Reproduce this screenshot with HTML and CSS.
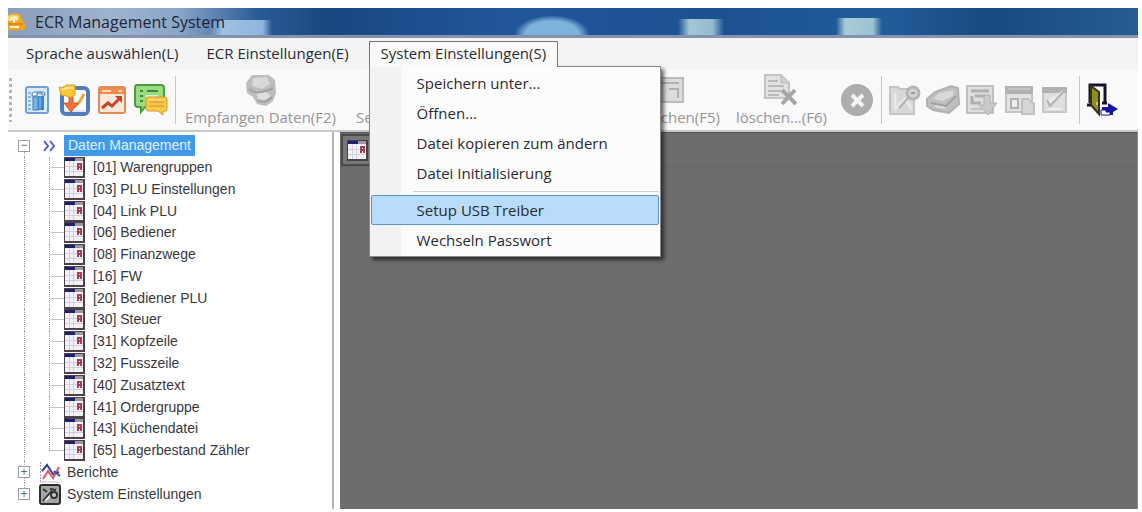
FILE: index.html
```html
<!DOCTYPE html>
<html lang="de">
<head>
    <meta charset="UTF-8">
    <meta name="viewport" content="width=device-width, initial-scale=1.0">
    <title>ECR Management System</title>
    <link rel="stylesheet" href="styles.css">
</head>
<body>
    <svg class="sprite" aria-hidden="true">
        <symbol id="calendar" viewBox="0 0 21 21">
            <rect width="21" height="21" fill="#4c4146"/>
            <rect x="1" y="1" width="18" height="3" fill="#9a9a9e"/>
            <rect x="1" y="1" width="10" height="3" fill="#20206e"/>
            <rect x="1" y="4" width="18" height="15" fill="#f3f1f8"/>
            <path d="M5.500 4v15M9.500 4v15M1 9.500h18M1 14.500h18" stroke="#d3cfe0" fill="none"/>
            <path d="M13 7h4v6M14 7v6M13 10h4" stroke="#a8404c" stroke-width="2" fill="none"/>
        </symbol>
    </svg>

    <div class="window">
        <header class="titlebar">
            <svg class="app-icon" width="18" height="20" viewBox="0 0 18 20">
                <path d="M0 3Q6 0 12 2L14 8L17 12V17Q9 20 0 18Z" fill="#f2a521"/>
                <path d="M0 4Q6 1 11 4L10 9H0Z" fill="#ffd567"/>
                <path d="M2 8Q6 3 10 7M6 6V11M2 15H11" stroke="#fff3d0" stroke-width="2" fill="none"/>
                <path d="M0 12H15" stroke="#c9690e"/>
            </svg>
            <h1>ECR Management System</h1>
        </header>

        <nav class="menubar">
            <button class="menu-title">Sprache auswählen(L)</button>
            <button class="menu-title">ECR Einstellungen(E)</button>
            <div class="menu-open">
                <button class="menu-title active" aria-expanded="true">System Einstellungen(S)</button>
                <div class="dropdown">
                    <button>Speichern unter...</button>
                    <button>Öffnen...</button>
                    <button>Datei kopieren zum ändern</button>
                    <button>Datei Initialisierung</button>
                    <hr>
                    <button class="selected">Setup USB Treiber</button>
                    <button>Wechseln Passwort</button>
                </div>
            </div>
        </nav>

        <div class="toolbar">
            <span class="grip"></span>
            <div class="tool-group">
                <button class="tool" aria-label="Kasse">
                    <svg width="26" height="28" viewBox="0 0 26 28">
                        <rect x="2" y="1" width="22" height="26" rx="2" fill="#d9ebfa" stroke="#6fa0d0" stroke-width="2"/>
                        <path d="M4 7h3M4 11h3M4 15h3M4 19h3M4 23h3" stroke="#8db7df" stroke-width="2"/>
                        <path d="M8 8Q9 5 12 6H19Q21 6 21 9H18V7H13V10H8Z" fill="#fff" stroke="#3b78b8"/>
                        <rect x="9" y="11" width="5" height="13" fill="#7fb5e6" stroke="#3979bb"/>
                        <rect x="14" y="10" width="6" height="14" fill="#3a86d0"/>
                        <path d="M16 11v12" stroke="#9fcbf2"/>
                    </svg>
                </button>
                <button class="tool" aria-label="Import">
                    <svg width="32" height="33" viewBox="0 0 32 33">
                        <rect x="4" y="4" width="26" height="26" rx="4" fill="#fff" stroke="#527cc0" stroke-width="4"/>
                        <path d="M7 27H28" stroke="#dbe4f4" stroke-width="2"/>
                        <path d="M16 23Q21 20 26 10" stroke="#e8a83c" stroke-width="3" fill="none"/>
                        <path d="M11 12H15V19H20L13 28L6 19H11Z" fill="#ee7139" stroke="#d45722"/>
                        <path d="M1 3L5 4L8 1H17V11Q13 15 8 12L3 11Z" fill="#fcc735" stroke="#e2a01c"/>
                        <path d="M4 6Q9 3 15 4" stroke="#ffe88e" stroke-width="2" fill="none"/>
                    </svg>
                </button>
                <button class="tool" aria-label="Diagramm">
                    <svg width="28" height="28" viewBox="0 0 28 28">
                        <rect x="1" y="1" width="26" height="26" rx="2" fill="#fbe6d8" stroke="#e08c56" stroke-width="2"/>
                        <rect x="2" y="2" width="24" height="6" fill="#f28c4c"/>
                        <path d="M4 5H13M20 5H24" stroke="#ffd5b5" stroke-width="2"/>
                        <path d="M4 22L10 17L14 20L22 12" stroke="#c5442c" stroke-width="3" fill="none"/>
                        <path d="M17 10H24V17Z" fill="#c5442c"/>
                    </svg>
                </button>
                <button class="tool" aria-label="Nachrichten">
                    <svg width="34" height="33" viewBox="0 0 34 33">
                        <path d="M3 1H27Q30 1 30 4V20Q30 23 27 23H11L7 28V23H4Q1 23 1 20V4Q1 1 3 1Z" fill="#9cdc80" stroke="#4c9c40" stroke-width="2"/>
                        <path d="M6 7H9M6 12H9M6 17H9M13 7H24" stroke="#3c8a3c" stroke-width="2"/>
                        <path d="M12 12H24" stroke="#d9f4cb" stroke-width="2"/>
                        <path d="M15 13H31Q33 13 33 15V25Q33 27 31 27H29V31L24 27H15Q12 27 12 25V15Q12 13 15 13Z" fill="#fbc94a" stroke="#d9962a"/>
                        <path d="M15 18H30M15 22H30" stroke="#d78c2b"/>
                        <path d="M15 16H30" stroke="#ffe699"/>
                    </svg>
                </button>
            </div>
            <span class="separator"></span>

            <button class="tool labelled" disabled>
                <svg width="32" height="32" viewBox="0 0 32 32">
                    <path d="M7 1H24L30 6L31 19L28 27L21 32L12 30L8 23L2 19L1 9Z" fill="#bdbdbd"/>
                    <path d="M8 4L22 3L25 10L17 15L7 12Z" fill="#d9d9d9"/>
                    <path d="M11 17L20 17L26 22L20 26L13 25Z" fill="#dedede"/>
                    <path d="M4 15Q12 22 28 14M12 26Q20 31 27 23" stroke="#a2a2a2" stroke-width="2" fill="none"/>
                </svg>
                <span>Empfangen Daten(F2)</span>
            </button>
            <button class="tool labelled send" disabled><span>Se</span></button>
            <button class="tool labelled search" disabled>
                <svg width="32" height="32" viewBox="0 0 32 32">
                    <rect x="1" y="4" width="30" height="24" fill="#dcdcdc" stroke="#bcbcbc" stroke-width="2"/>
                    <path d="M5 9H27M17 15H26V24" stroke="#b0b0b0" stroke-width="2" fill="none"/>
                </svg>
                <span>chen(F5)</span>
            </button>
            <button class="tool labelled" disabled>
                <svg width="34" height="32" viewBox="0 0 34 32">
                    <path d="M1 1H17L25 9V24H1Z" fill="#e2e2e2" stroke="#c4c4c4" stroke-width="2"/>
                    <path d="M17 1V9H25" fill="#cfcfcf" stroke="#b8b8b8"/>
                    <path d="M4 7H14M4 12H20M4 17H17M4 21H15" stroke="#bababa" stroke-width="2"/>
                    <path d="M18 16L32 30M31 16L18 30" stroke="#a6a6a6" stroke-width="4"/>
                </svg>
                <span>löschen...(F6)</span>
            </button>
            <button class="tool stop" aria-label="Abbrechen" disabled>
                <svg width="33" height="33" viewBox="0 0 33 33">
                    <circle cx="16" cy="16" r="16" fill="#adadad"/>
                    <path d="M11 11L22 22M22 11L11 22" stroke="#f4f4f4" stroke-width="4"/>
                </svg>
            </button>
            <span class="separator"></span>

            <div class="tool-group reports">
                <button class="tool" aria-label="Suchen" disabled>
                    <svg width="32" height="32" viewBox="0 0 32 32">
                        <path d="M1 3H9L11 5H25V30H1Z" fill="#d8d8d8" stroke="#c4c4c4" stroke-width="2"/>
                        <path d="M5 26L16 15L23 25M6 9V23" stroke="#e8e8e8" stroke-width="3" fill="none"/>
                        <path d="M10 24L20 13" stroke="#b2b2b2" stroke-width="2"/>
                        <circle cx="24" cy="9" r="6" fill="#d2d2d2" stroke="#b4b4b4" stroke-width="3"/>
                        <path d="M22 9h4" stroke="#999" stroke-width="2"/>
                    </svg>
                </button>
                <button class="tool" aria-label="Drucken" disabled>
                    <svg width="34" height="32" viewBox="0 0 34 32">
                        <path d="M1 15L9 8L25 2L32 4L33 20L23 29L7 26L1 22Z" fill="#bfbfbf" stroke="#b2b2b2" stroke-width="2"/>
                        <path d="M7 15L13 9L28 6L27 12L17 17Z" fill="#d8d8d8"/>
                        <path d="M5 19L20 22L30 12" stroke="#a2a2a2" stroke-width="2" fill="none"/>
                        <path d="M9 22L19 24" stroke="#dcdcdc" stroke-width="2"/>
                    </svg>
                </button>
                <button class="tool" aria-label="Senden" disabled>
                    <svg width="34" height="32" viewBox="0 0 34 32">
                        <rect x="2" y="2" width="26" height="27" fill="#dedede" stroke="#c0c0c0" stroke-width="2"/>
                        <path d="M6 7H24M7 12V19H16M10 12H20" stroke="#aeaeae" stroke-width="3" fill="none"/>
                        <path d="M6 25H17" stroke="#c2c2c2" stroke-width="2"/>
                        <path d="M19 11H25V19H32L23 31L14 21H19Z" fill="#cacaca" stroke="#b2b2b2"/>
                    </svg>
                </button>
                <button class="tool" aria-label="Bericht" disabled>
                    <svg width="32" height="32" viewBox="0 0 32 32">
                        <rect x="2" y="3" width="26" height="25" fill="#e2e2e2" stroke="#c4c4c4" stroke-width="2"/>
                        <rect x="1" y="2" width="28" height="8" fill="#b2b2b2"/>
                        <path d="M4 5H26" stroke="#c5c5c5" stroke-width="2"/>
                        <rect x="7" y="15" width="7" height="9" fill="#eee" stroke="#b0b0b0" stroke-width="2"/>
                        <path d="M18 15H24L30 20V30H18Z" fill="#d5d5d5" stroke="#c0c0c0" stroke-width="2"/>
                    </svg>
                </button>
                <button class="tool" aria-label="Bearbeiten" disabled>
                    <svg width="28" height="32" viewBox="0 0 28 32">
                        <rect x="2" y="4" width="23" height="24" fill="#dedede" stroke="#c6c6c6" stroke-width="2"/>
                        <rect x="1" y="3" width="25" height="6" fill="#b2b2b2"/>
                        <path d="M6 16L9 22L26 4" stroke="#b2b2b2" stroke-width="2" fill="#e8e8e8"/>
                        <path d="M6 25H21" stroke="#ececec" stroke-width="2"/>
                    </svg>
                </button>
            </div>
            <span class="separator"></span>
            <button class="tool exit" aria-label="Beenden">
                <svg width="32" height="34" viewBox="0 0 32 34">
                    <path d="M3 20V2H18V20" fill="#fff" stroke="#14142a" stroke-width="3"/>
                    <path d="M0 22H5M15 20H20" stroke="#14142a" stroke-width="3"/>
                    <path d="M4 3L12 9V31L4 22Z" fill="#8e8c22" stroke="#34340e" stroke-width="2"/>
                    <path d="M10 19v3" stroke="#fff"/>
                    <path d="M15 30V24H21V20L31 26L26 29V32H19V30Z" fill="#1515a0"/>
                    <path d="M14 27H19V29H23V32H14Z" fill="#fff" stroke="#1515a0"/>
                </svg>
            </button>
        </div>

        <div class="content">
            <aside class="sidebar">
                <ul class="tree">
                    <li class="root first">
                        <button class="toggle" aria-label="Zuklappen">−</button>
                        <svg class="arrows" width="14" height="12" viewBox="0 0 14 12">
                            <path d="M1 1L5 6L1 11M7 1L11 6L7 11" stroke="#4d5fc9" stroke-width="2" fill="none"/>
                        </svg>
                        <a class="current" href="#">Daten Management</a>
                    </li>
                    <li class="child"><svg><use href="#calendar"/></svg><a href="#">[01] Warengruppen</a></li>
                    <li class="child"><svg><use href="#calendar"/></svg><a href="#">[03] PLU Einstellungen</a></li>
                    <li class="child"><svg><use href="#calendar"/></svg><a href="#">[04] Link PLU</a></li>
                    <li class="child"><svg><use href="#calendar"/></svg><a href="#">[06] Bediener</a></li>
                    <li class="child"><svg><use href="#calendar"/></svg><a href="#">[08] Finanzwege</a></li>
                    <li class="child"><svg><use href="#calendar"/></svg><a href="#">[16] FW</a></li>
                    <li class="child"><svg><use href="#calendar"/></svg><a href="#">[20] Bediener PLU</a></li>
                    <li class="child"><svg><use href="#calendar"/></svg><a href="#">[30] Steuer</a></li>
                    <li class="child"><svg><use href="#calendar"/></svg><a href="#">[31] Kopfzeile</a></li>
                    <li class="child"><svg><use href="#calendar"/></svg><a href="#">[32] Fusszeile</a></li>
                    <li class="child"><svg><use href="#calendar"/></svg><a href="#">[40] Zusatztext</a></li>
                    <li class="child"><svg><use href="#calendar"/></svg><a href="#">[41] Ordergruppe</a></li>
                    <li class="child"><svg><use href="#calendar"/></svg><a href="#">[43] Küchendatei</a></li>
                    <li class="child last"><svg><use href="#calendar"/></svg><a href="#">[65] Lagerbestand Zähler</a></li>
                    <li class="root">
                        <button class="toggle" aria-label="Aufklappen">+</button>
                        <svg class="root-icon" width="22" height="21" viewBox="0 0 22 21">
                            <path d="M1.500 0V20H21" stroke="#c08fc0" stroke-dasharray="2 1" fill="none"/>
                            <path d="M3 9L8 3L14 12L20 10" stroke="#34409c" stroke-width="2" fill="none"/>
                            <path d="M4 17L9 9L14 16L20 5" stroke="#d55a68" stroke-width="2" fill="none"/>
                            <path d="M15 9L21 14" stroke="#5a3c9e" stroke-width="2"/>
                        </svg>
                        <a href="#">Berichte</a>
                    </li>
                    <li class="root end">
                        <button class="toggle" aria-label="Aufklappen">+</button>
                        <svg class="root-icon" width="22" height="21" viewBox="0 0 22 21">
                            <rect x="1" y="1" width="20" height="19" rx="2" fill="#a5a5a5" stroke="#2e2e2e" stroke-width="2"/>
                            <path d="M4 17L13 7M4 5L8 8M11 5L17 6" stroke="#333" stroke-width="2"/>
                            <path d="M6 17L13 10" stroke="#eee" stroke-width="2"/>
                            <circle cx="15" cy="11" r="3" fill="#ccc" stroke="#333" stroke-width="2"/>
                        </svg>
                        <a href="#">System Einstellungen</a>
                    </li>
                </ul>
            </aside>
            <main class="workspace">
                <div class="workspace-bar">
                    <button class="sheet" aria-label="Tabelle"><svg><use href="#calendar"/></svg></button>
                </div>
            </main>
        </div>
    </div>
</body>
</html>
```
FILE: styles.css
```css
* {
    box-sizing: border-box;
}
body {
    margin: 0;
    padding: 8px 4px 3px 8px;
    height: 100vh;
    background: #fff;
    color: #2b2b30;
    font-family: "Open Sans", "Noto Sans", sans-serif;
    font-size: 15px;
}
button {
    margin: 0;
    padding: 0;
    border: none;
    background: none;
    color: inherit;
    font: inherit;
}
svg {
    display: block;
    flex: none;
}
.sprite {
    position: absolute;
    width: 0;
    height: 0;
}
.window {
    display: flex;
    flex-direction: column;
    height: 100%;
}

/* Title bar, with the desktop showing through the glass */
.titlebar {
    display: flex;
    align-items: center;
    flex: none;
    gap: 9px;
    height: 30px;
    border-bottom: 3px solid #8492ab;
    background:
        linear-gradient(to right, transparent, #9fc0e2 20%, #8fb6de 85%, transparent) 202px 100% / 62px 15px no-repeat,
        radial-gradient(ellipse at 50% 100%, #7fb2dc 50%, transparent 70%) 506px 100% / 76px 20px no-repeat,
        linear-gradient(to right, transparent, #a3c8d4 25%, #93bbd0 75%, transparent) 670px 100% / 46px 16px no-repeat,
        linear-gradient(to right, transparent, #a9cbd6 20%, #9cc3d2 80%, transparent) 828px 100% / 46px 17px no-repeat,
        linear-gradient(to right, #8b9db9 0, #a0b3cc 100px, #8ba6c9 170px, #2a5b96 250px, #1a4681 320px, #20579a 500px, #1c5191 700px, #215c9a 880px, #184a80 980px, #255c94 100%);
}
.titlebar h1 {
    margin: 0;
    color: #1c2637;
    font-size: 16px;
    font-weight: 400;
}

/* Menu bar */
.menubar {
    display: flex;
    align-items: center;
    flex: none;
    gap: 4px;
    height: 32px;
    padding-left: 6px;
    background: #f4f4f5;
}
.menu-title {
    height: 26px;
    padding: 0 12px 3px;
    white-space: nowrap;
}
.menu-open {
    position: relative;
    margin-left: 4px;
}
.menu-title.active {
    position: relative;
    z-index: 3;
    border: 1px solid #77777a;
    border-bottom: none;
    background: #fafafb;
    padding: 0 11px 4px;
}
.dropdown {
    position: absolute;
    top: 25px;
    left: 0;
    z-index: 2;
    width: 292px;
    padding: 1px;
    border: 1px solid #8a8a8c;
    background: linear-gradient(to right, #f2f2f4 30px, #fcfcfd 32px);
    box-shadow: 3px 3px 4px rgba(0, 0, 0, 0.6);
}
.dropdown button {
    display: block;
    width: 100%;
    height: 30px;
    padding-left: 46px;
    text-align: left;
}
.dropdown hr {
    margin: 3px 0 3px 42px;
    border: none;
    border-top: 1px solid #cfcfd2;
}
.dropdown .selected {
    border: 1px solid #5a94c4;
    border-radius: 2px;
    background: #b9dcfa;
    padding-left: 45px;
}

/* Toolbar */
.toolbar {
    display: flex;
    align-items: center;
    flex: none;
    height: 62px;
    padding-left: 1px;
    border-bottom: 2px solid #c9c9cb;
    background: #f9f9fa;
}
.tool-group {
    display: flex;
    align-items: center;
    gap: 8px;
}
.grip {
    width: 3px;
    height: 44px;
    margin-right: 12px;
    background: repeating-linear-gradient(#b5b5b8 0 3px, transparent 3px 6px);
}
.separator {
    width: 1px;
    height: 48px;
    margin: 0 7px;
    background: #c6c6ca;
}
.labelled {
    display: flex;
    flex-direction: column;
    align-items: center;
    justify-content: flex-end;
    height: 56px;
    margin-right: 16px;
    color: #96969a;
    line-height: 22px;
    white-space: nowrap;
}
.separator + .labelled {
    margin-left: 2px;
}
.send {
    width: 244px;
    margin-left: 4px;
    align-items: flex-start;
}
.search {
    width: 104px;
}
.search span {
    align-self: flex-end;
}
.stop {
    margin-left: -2px;
}
.reports {
    gap: 5px;
    margin-right: 3px;
}

/* Main area */
.content {
    display: flex;
    flex: 1;
    min-height: 0;
}
.sidebar {
    flex: none;
    width: 326px;
    padding: 3px 0 4px 10px;
    border-right: 2px solid #b4b4b8;
    background: #fff;
    font-family: "Liberation Sans", Arial, sans-serif;
    font-size: 14px;
}
.tree {
    display: grid;
    grid-auto-rows: 1fr;
    height: 100%;
    margin: 0;
    padding: 0;
    list-style: none;
}
.tree li {
    position: relative;
    display: flex;
    align-items: center;
    min-height: 0;
}
.tree a {
    color: #38383c;
    line-height: 21px;
    text-decoration: none;
    white-space: nowrap;
}
.child {
    gap: 8px;
    padding-left: 46px;
}
.child svg,
.sheet svg {
    width: 21px;
    height: 21px;
}
/* dotted connector lines */
.tree li::before {
    content: "";
    position: absolute;
    top: 0;
    bottom: 0;
    left: 6px;
    border-left: 1px dotted #a0a0a4;
}
.tree .first::before {
    top: 50%;
}
.tree .end::before {
    bottom: 50%;
}
.child::after {
    content: "";
    position: absolute;
    top: 0;
    left: 31px;
    width: 14px;
    height: 100%;
    border-left: 1px dotted #a0a0a4;
    background: linear-gradient(#c4c4c8, #c4c4c8) no-repeat 0 50% / 100% 1px;
}
.child.last::after {
    height: 50%;
    background-position: 0 100%;
}
.toggle {
    position: relative;
    width: 12px;
    height: 12px;
    border: 1px solid #9c9ca0;
    background: #fff;
    color: #66666a;
    font-size: 12px;
    line-height: 9px;
}
.arrows {
    margin: 0 12px 0 13px;
}
.root-icon {
    margin: 0 6px 0 9px;
}
.tree .current {
    margin-left: -5px;
    padding: 0 4px;
    background: #3f9ae8;
    color: #e2f1ff;
}
.workspace {
    flex: 1;
    margin-left: 6px;
    border-top: 1px solid #555;
    border-right: 1px solid #8c8c8c;
    background: #6d6d6d;
}
.workspace-bar {
    height: 34px;
    padding: 1px;
    border-bottom: 1px solid #666;
}
.sheet {
    display: flex;
    align-items: center;
    justify-content: center;
    width: 32px;
    height: 32px;
    border: 2px solid #4a4a4a;
    background: #777;
}
```
